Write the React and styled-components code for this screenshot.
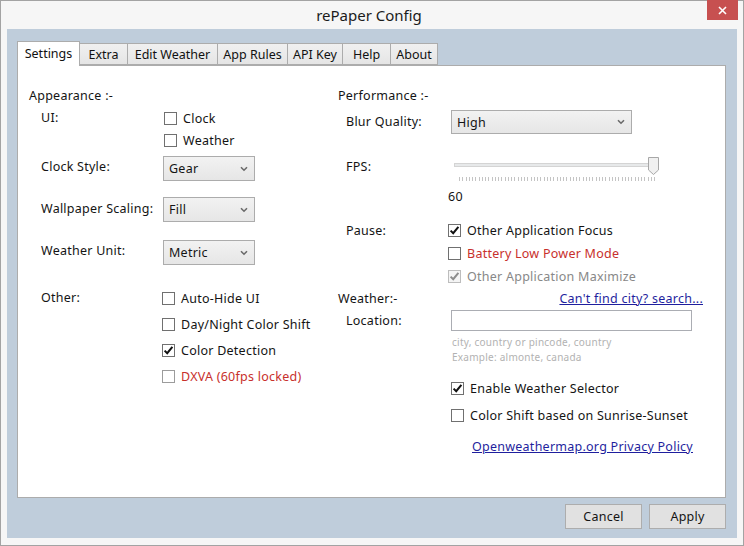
import React from 'react';
import styled, { createGlobalStyle } from 'styled-components';

const GlobalStyle = createGlobalStyle`
  html, body {
    margin: 0;
    padding: 0;
    background: #ffffff;
  }
  * {
    box-sizing: border-box;
  }
`;

const BODY_FONT = `"Noto Sans", "DejaVu Sans", sans-serif`;
const UI_FONT = `"Noto Sans", "Open Sans", sans-serif`;

// Window chrome
const Window = styled.div`
  width: 744px;
  height: 546px;
  border: 1px solid #a3a3a3;
  background: #f6f6f6;
  display: flex;
  flex-direction: column;
  font-family: ${BODY_FONT};
  font-size: 12.5px;
  letter-spacing: 0.25px;
  color: #141414;
`;

const TitleBar = styled.div`
  height: 28px;
  flex: none;
  display: grid;
  grid-template-columns: 1fr auto 1fr;
  align-items: start;
  letter-spacing: 0;
`;

const Title = styled.div`
  grid-column: 2;
  font-family: ${UI_FONT};
  font-size: 15px;
  line-height: 28px;
  color: #1b1b1b;
  margin-left: -6px;
`;

const CloseButton = styled.div`
  grid-column: 3;
  justify-self: end;
  width: 31px;
  height: 20px;
  margin-top: -1px;
  margin-right: 5px;
  background: #c75050;
  display: grid;
  place-items: center;
`;

const Client = styled.div`
  flex: none;
  height: 509px;
  margin: 0 6px 7px 6px;
  background: #bfcddb;
  padding: 12px 11px 0 10px;
  display: flex;
  flex-direction: column;
`;

// Tabs
const TabStrip = styled.div`
  height: 24px;
  display: flex;
  align-items: flex-end;
  position: relative;
  z-index: 1;
  letter-spacing: 0;
`;

const Tab = styled.div`
  width: ${p => p.$w}px;
  height: ${p => (p.$active ? 25 : 22)}px;
  margin-left: ${p => (p.$first ? 0 : -1)}px;
  margin-bottom: ${p => (p.$active ? -1 : 0)}px;
  border: 1px solid #acacac;
  border-bottom: ${p => (p.$active ? 'none' : '1px solid #acacac')};
  background: ${p => (p.$active ? '#ffffff' : 'linear-gradient(#f0f0f0, #e5e5e5)')};
  font-family: ${UI_FONT};
  font-size: 12.5px;
  color: #111;
  display: flex;
  align-items: center;
  justify-content: center;
  padding-bottom: ${p => (p.$active ? 2 : 0)}px;
  position: relative;
  z-index: ${p => (p.$active ? 2 : 1)};
`;

const Panel = styled.div`
  height: 433px;
  flex: none;
  background: #ffffff;
  border: 1px solid #acacac;
  padding: 22px 0 0 11px;
  display: grid;
  grid-template-columns: 309px 1fr;
`;

const Column = styled.div`
  display: flex;
  flex-direction: column;
`;

const Heading = styled.div`
  line-height: 16px;
  height: 16px;
`;

const HeadRow = styled.div`
  display: flex;
  justify-content: space-between;
  line-height: 16px;
  height: 16px;
  margin-top: ${p => p.$mt || 0}px;
  padding-right: 22px;
`;

const Field = styled.div`
  display: flex;
  align-items: ${p => (p.$top ? 'flex-start' : 'center')};
  margin-top: ${p => p.$mt || 0}px;
  padding-left: ${p => p.$indent}px;
`;

const FieldLabel = styled.div`
  width: ${p => p.$w}px;
  flex: none;
  line-height: ${p => p.$lh || 16}px;
  margin-top: ${p => p.$lift || 0}px;
`;

const Stack = styled.div`
  display: flex;
  flex-direction: column;
  margin-top: ${p => p.$mt || 0}px;
  padding-left: ${p => p.$indent || 0}px;
`;

// Checkbox
const CheckRow = styled.div`
  display: flex;
  align-items: center;
  height: ${p => p.$h}px;
  margin-left: ${p => p.$shift || 0}px;
  color: ${p => (p.$tone === 'red' ? '#c8302c' : p.$tone === 'muted' ? '#888888' : '#141414')};
`;

const Box = styled.span`
  width: 13px;
  height: 13px;
  flex: none;
  border: 1px solid ${p => (p.$disabled ? '#bdbdbd' : p.$soft ? '#9c9c9c' : '#707070')};
  background: ${p => (p.$disabled ? '#f4f4f4' : '#ffffff')};
  margin-right: ${p => p.$gap || 6}px;
  display: grid;
  place-items: center;
`;

// Dropdown
const Select = styled.div`
  width: ${p => p.$w}px;
  height: ${p => p.$h}px;
  border: 1px solid #acacac;
  background: linear-gradient(#f2f2f2, #e6e6e6);
  display: flex;
  align-items: center;
  justify-content: space-between;
  padding: 0 6px 0 5px;
`;

const TextInput = styled.div`
  width: 241px;
  height: 21px;
  border: 1px solid #abadb3;
  background: #fff;
`;

const Hint = styled.div`
  font-size: 10px;
  line-height: 15px;
  color: #b2b2b2;
`;

const Link = styled.a`
  color: #1f1f9e;
  text-decoration: underline;
  line-height: 16px;
  cursor: pointer;
  display: inline-block;
  margin-top: ${p => p.$mt || 0}px;
  margin-left: ${p => p.$ml || 0}px;
`;

const FpsValue = styled.div`
  line-height: 16px;
  margin-top: 7px;
`;

const SliderSvg = styled.svg`
  display: block;
  margin-left: 3px;
`;

const Footer = styled.div`
  display: flex;
  justify-content: flex-end;
  gap: 7px;
  margin-top: 6px;
`;

const Button = styled.div`
  width: 77px;
  height: 25px;
  border: 1px solid #adadad;
  background: #e1e1e1;
  display: grid;
  place-items: center;
  color: #141414;
`;

const Tick = ({ color = '#111' }) => (
  <svg width="11" height="11" viewBox="0 0 11 11">
    <path d="M1.6 5.6 L4.2 8.2 L9.4 1.8" fill="none" stroke={color} strokeWidth="2" />
  </svg>
);

const Chevron = () => (
  <svg width="8" height="6" viewBox="0 0 8 6">
    <path d="M1 1.2 L4 4.2 L7 1.2" fill="none" stroke="#6a6a6a" strokeWidth="1.6" />
  </svg>
);

const CheckItem = ({ label, checked, h, shift, tone, disabled, soft }) => (
  <CheckRow $h={h} $shift={shift} $tone={disabled ? 'muted' : tone}>
    <Box $disabled={disabled} $soft={soft}>
      {checked && <Tick color={disabled ? '#8c8c8c' : '#111'} />}
    </Box>
    {label}
  </CheckRow>
);

const Slider = () => {
  const ticks = [];
  for (let i = 0; i <= 60; i++) {
    const x = Math.round(8 + (195 * i) / 60) + 0.5;
    ticks.push(<line key={i} x1={x} y1="21" x2={x} y2="25" stroke="#c4c4c4" strokeWidth="1" />);
  }
  return (
    <SliderSvg width="210" height="26" viewBox="0 0 210 26">
      <rect x="3.5" y="7.5" width="203" height="3" fill="#e7e9ea" stroke="#d4d4d4" />
      {ticks}
      <path d="M197.5 1.5 H207.5 V14 L202.5 18.5 L197.5 14 Z" fill="#f0f0f0" stroke="#a7a7a7" />
    </SliderSvg>
  );
};

const tabs = [
  { label: 'Settings', w: 63 },
  { label: 'Extra', w: 49 },
  { label: 'Edit Weather', w: 91 },
  { label: 'App Rules', w: 71 },
  { label: 'API Key', w: 56 },
  { label: 'Help', w: 49 },
  { label: 'About', w: 48 },
];

const LEFT_LABEL = 122;
const RIGHT_LABEL = 105;

export default function App() {
  return (
    <>
      <GlobalStyle />
      <Window>
        <TitleBar>
          <Title>rePaper Config</Title>
          <CloseButton>
            <svg width="9" height="9" viewBox="0 0 9 9">
              <path d="M1 1 L8 8 M8 1 L1 8" stroke="#fff" strokeWidth="1.6" />
            </svg>
          </CloseButton>
        </TitleBar>

        <Client>
          <TabStrip>
            {tabs.map((t, i) => (
              <Tab key={t.label} $w={t.w} $first={i === 0} $active={i === 0}>
                {t.label}
              </Tab>
            ))}
          </TabStrip>

          <Panel>
            <Column>
              <Heading>Appearance :-</Heading>

              <Field $top $mt={3} $indent={12}>
                <FieldLabel $w={LEFT_LABEL} $lh={22}>UI:</FieldLabel>
                <Stack>
                  <CheckItem label="Clock" h={22} shift={1} />
                  <CheckItem label="Weather" h={22} shift={1} />
                </Stack>
              </Field>

              <Field $mt={5} $indent={12}>
                <FieldLabel $w={LEFT_LABEL} $lift={-3}>Clock Style:</FieldLabel>
                <Select $w={92} $h={25}>Gear<Chevron /></Select>
              </Field>

              <Field $mt={16} $indent={12}>
                <FieldLabel $w={LEFT_LABEL} $lift={-2}>Wallpaper Scaling:</FieldLabel>
                <Select $w={92} $h={25}>Fill<Chevron /></Select>
              </Field>

              <Field $mt={18} $indent={12}>
                <FieldLabel $w={LEFT_LABEL} $lift={-4}>Weather Unit:</FieldLabel>
                <Select $w={92} $h={25}>Metric<Chevron /></Select>
              </Field>

              <Field $top $mt={20} $indent={12}>
                <FieldLabel $w={LEFT_LABEL} $lh={26}>Other:</FieldLabel>
                <Stack>
                  <CheckItem label="Auto-Hide UI" h={26} shift={-1} />
                  <CheckItem label="Day/Night Color Shift" h={26} shift={-1} />
                  <CheckItem label="Color Detection" h={26} shift={-1} checked />
                  <CheckItem label="DXVA (60fps locked)" h={26} shift={-1} tone="red" soft />
                </Stack>
              </Field>
            </Column>

            <Column>
              <Heading>Performance :-</Heading>

              <Field $mt={6} $indent={8}>
                <FieldLabel $w={RIGHT_LABEL}>Blur Quality:</FieldLabel>
                <Select $w={181} $h={24}>High<Chevron /></Select>
              </Field>

              <Field $top $mt={22} $indent={8}>
                <FieldLabel $w={RIGHT_LABEL - 3} $lh={22}>FPS:</FieldLabel>
                <Stack>
                  <Slider />
                  <FpsValue>60</FpsValue>
                </Stack>
              </Field>

              <Field $top $mt={14} $indent={8}>
                <FieldLabel $w={RIGHT_LABEL} $lh={23}>Pause:</FieldLabel>
                <Stack>
                  <CheckItem label="Other Application Focus" h={23} shift={-3} checked />
                  <CheckItem label="Battery Low Power Mode" h={23} shift={-3} tone="red" />
                  <CheckItem label="Other Application Maximize" h={23} shift={-3} checked disabled />
                </Stack>
              </Field>

              <HeadRow $mt={3}>
                <span>Weather:-</span>
                <Link>Can't find city? search...</Link>
              </HeadRow>

              <Field $mt={3} $indent={8}>
                <FieldLabel $w={RIGHT_LABEL}>Location:</FieldLabel>
                <TextInput />
              </Field>

              <Stack $mt={4} $indent={8 + RIGHT_LABEL + 1}>
                <Hint>city, country or pincode, country</Hint>
                <Hint>Example: almonte, canada</Hint>
              </Stack>

              <Stack $mt={10} $indent={8 + RIGHT_LABEL}>
                <CheckItem label="Enable Weather Selector" h={27} checked />
                <CheckItem label="Color Shift based on Sunrise-Sunset" h={27} />
                <Link $mt={10} $ml={21}>Openweathermap.org Privacy Policy</Link>
              </Stack>
            </Column>
          </Panel>

          <Footer>
            <Button>Cancel</Button>
            <Button>Apply</Button>
          </Footer>
        </Client>
      </Window>
    </>
  );
}
